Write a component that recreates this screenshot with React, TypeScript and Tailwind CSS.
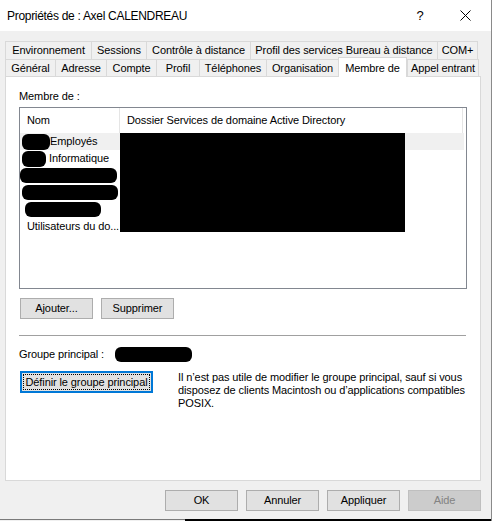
import React from 'react';

const row1 = [
  { label: 'Environnement', w: 86 },
  { label: 'Sessions', w: 55 },
  { label: 'Contrôle à distance', w: 104 },
  { label: 'Profil des services Bureau à distance', w: 187 },
  { label: 'COM+', w: 41 },
];

const row2 = [
  { label: 'Général', w: 50 },
  { label: 'Adresse', w: 51 },
  { label: 'Compte', w: 50 },
  { label: 'Profil', w: 43 },
  { label: 'Téléphones', w: 67 },
  { label: 'Organisation', w: 72 },
  { label: 'Membre de', w: 69, active: true },
  { label: 'Appel entrant', w: 72 },
];

const Btn: React.FC<{ label: string; disabled?: boolean; className?: string }> = ({ label, disabled, className }) => (
  <div
    className={`h-[21px] w-[73px] flex items-center justify-center border ${
      disabled ? 'border-[#bfbfbf] bg-[#cccccc] text-[#838383]' : 'border-[#adadad] bg-[#e1e1e1] text-black'
    } ${className ?? ''}`}
  >
    {label}
  </div>
);

const Blob: React.FC<{ w: number; h?: number; className?: string }> = ({ w, h = 14, className }) => (
  <span
    className={`inline-block bg-black rounded-[6px] ${className ?? ''}`}
    style={{ width: w, height: h }}
  />
);

const App: React.FC = () => {
  return (
    <div
      className="relative w-[492px] h-[521px] bg-[#f0f0f0] flex flex-col overflow-hidden text-[11px] tracking-[-0.1px] text-black border-r border-[#8a8a8a]"
      style={{ fontFamily: '"Liberation Sans", Arial, sans-serif' }}
    >
      {/* title bar */}
      <div className="h-[31px] bg-white flex items-center pl-[7px] shrink-0">
        <span className="flex-1 text-[12px] tracking-[-0.3px]">Propriétés de : Axel CALENDREAU</span>
        <span className="w-[14px] text-center mr-[33px] text-[13px]">?</span>
        <svg width="11" height="11" viewBox="0 0 11 11" className="mr-[20px]">
          <path d="M0.5 0.5 L10.5 10.5 M10.5 0.5 L0.5 10.5" stroke="#000" strokeWidth="1" />
        </svg>
      </div>

      {/* tabs */}
      <div className="ml-[5px] mt-[10px] flex flex-col">
        <div className="flex h-[18px]">
          {row1.map((t) => (
            <div
              key={t.label}
              className="h-[18px] flex items-center justify-center border border-b-0 border-r-0 last:border-r border-[#d9d9d9] bg-[#f0f0f0] whitespace-nowrap"
              style={{ width: t.w }}
            >
              {t.label}
            </div>
          ))}
        </div>
        <div className="flex h-[17px] items-end">
          {row2.map((t) =>
            t.active ? (
              <div
                key={t.label}
                className="relative z-10 h-[20px] -mb-[1px] flex items-start pt-[2px] justify-center border border-b-0 border-[#d9d9d9] bg-white whitespace-nowrap"
                style={{ width: t.w }}
              >
                {t.label}
              </div>
            ) : (
              <div
                key={t.label}
                className="h-[17px] flex items-center justify-center border border-b-0 border-r-0 last:border-r border-[#d9d9d9] bg-[#f0f0f0] whitespace-nowrap"
                style={{ width: t.w }}
              >
                {t.label}
              </div>
            )
          )}
        </div>
      </div>

      {/* panel */}
      <div className="ml-[5px] w-[476px] h-[405px] bg-white border border-[#d9d9d9] flex flex-col pl-[13px] pr-[13px]">
        <div className="mt-[11px] h-[16px] leading-[16px]">Membre de :</div>

        <div className="relative mt-[3px] w-[448px] h-[182px] border border-[#828790] flex flex-col">
          <div className="flex h-[25px] items-center">
            <div className="w-[100px] h-full flex items-center pl-[7px] border-r border-[#e5e5e5]">Nom</div>
            <div className="w-[343px] h-full flex items-center pl-[7px] border-r border-[#e5e5e5]">
              Dossier Services de domaine Active Directory
            </div>
          </div>
          <div className="flex flex-col">
            <div className="h-[17px] mr-[2px] bg-[#f0f0f0] flex items-center pl-[2px]">
              <Blob w={28} h={16} />
              <span>Employés</span>
            </div>
            <div className="h-[17px] flex items-center pl-[2px]">
              <Blob w={24} h={16} className="mr-[3px]" />
              <span>Informatique</span>
            </div>
            <div className="h-[17px] flex items-center">
              <Blob w={97} h={15} />
            </div>
            <div className="h-[17px] flex items-center pl-[2px]">
              <Blob w={96} h={15} />
            </div>
            <div className="h-[17px] flex items-center pl-[5px]">
              <Blob w={76} h={15} />
            </div>
            <div className="h-[17px] flex items-center pl-[7px]">Utilisateurs du do...</div>
          </div>
          <div className="absolute left-[100px] top-[25px] w-[285px] h-[99px] bg-black" />
        </div>

        <div className="mt-[9px] flex gap-[8px] pl-[1px]">
          <Btn label="Ajouter..." />
          <Btn label="Supprimer" />
        </div>

        <div className="mt-[16px] h-px w-[447px] bg-[#a0a0a0]" />

        <div className="mt-[10px] flex items-center h-[16px]">
          <span className="w-[96px]">Groupe principal :</span>
          <Blob w={77} h={15} />
        </div>

        <div className="mt-[9px] flex items-start">
          <div className="ml-[1px] w-[133px] h-[22px] border-2 border-[#0078d7] bg-[#e1e1e1] p-[1px]">
            <div className="w-full h-full border border-dotted border-black flex items-center justify-center whitespace-nowrap">
              Définir le groupe principal
            </div>
          </div>
          <div className="ml-[25px] leading-[13px] whitespace-nowrap">
            Il n’est pas utile de modifier le groupe principal, sauf si vous
            <br />
            disposez de clients Macintosh ou d’applications compatibles
            <br />
            POSIX.
          </div>
        </div>
      </div>

      {/* bottom buttons */}
      <div className="mt-[9px] flex gap-[8px] pl-[165px]">
        <Btn label="OK" />
        <Btn label="Annuler" />
        <Btn label="Appliquer" />
        <Btn label="Aide" disabled />
      </div>

      <div className="mt-auto flex h-[2px]">
        <div className="w-[185px] h-px bg-[#7a7a7a]" />
        <div className="flex-1 h-[2px] bg-black" />
      </div>
    </div>
  );
};

export default App;
